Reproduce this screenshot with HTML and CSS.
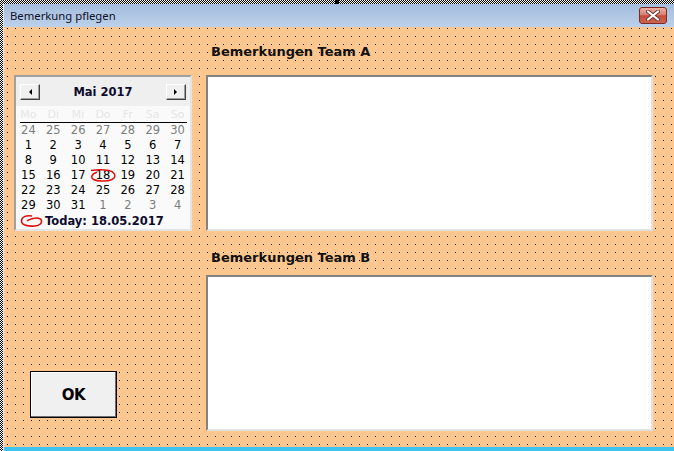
FILE: index.html
```html
<!DOCTYPE html>
<html lang="de">
<head>
    <meta charset="UTF-8">
    <title>Bemerkung pflegen</title>
    <link rel="stylesheet" href="styles.css">
</head>
<body>

<div class="screen">
    <div class="hatch-top"><span class="handle"></span></div>
    <div class="frame-body">
        <div class="hatch-left"></div>
        <div class="window">
            <!-- Titelleiste -->
            <div class="titlebar">
                <span class="title">Bemerkung pflegen</span>
                <button type="button" class="close-btn" aria-label="Schließen">
                    <svg width="14" height="11" viewBox="0 0 14 11">
                        <path d="M2 1.5 L12 9.5 M12 1.5 L2 9.5" stroke="#6a3a34" stroke-width="4" stroke-linecap="round"/>
                        <path d="M2 1.5 L12 9.5 M12 1.5 L2 9.5" stroke="#fff" stroke-width="2.2" stroke-linecap="round"/>
                    </svg>
                </button>
            </div>

            <!-- Formular -->
            <div class="client">
                <div class="label label-a">Bemerkungen Team A</div>

                <div class="calendar">
                    <div class="cal-head">
                        <button type="button" class="nav-btn"><span class="arrow-left"></span></button>
                        <span class="month">Mai 2017</span>
                        <button type="button" class="nav-btn"><span class="arrow-right"></span></button>
                    </div>
                    <div class="weekdays">
                        <span>Mo</span><span>Di</span><span>Mi</span><span>Do</span><span>Fr</span><span>Sa</span><span>So</span>
                    </div>
                    <div class="rule"></div>
                    <div class="days" id="days"></div>
                    <div class="today">
                        <svg width="23" height="14" viewBox="0 0 23 14" class="today-mark">
                            <path d="M12 2 C6 1, 1.5 3, 1.5 7 C1.5 11.5, 9 12.5, 15 12 C20 11.5, 22 9, 21.5 6.5 C21 4, 17 3.5, 13 4.5 C10 5.2, 8 6, 7 7" fill="none" stroke="#e01010" stroke-width="1.6"/>
                        </svg>
                        <span>Today: 18.05.2017</span>
                    </div>
                </div>

                <textarea class="note note-a"></textarea>

                <div class="label label-b">Bemerkungen Team B</div>

                <textarea class="note note-b"></textarea>

                <button type="button" class="ok-btn">OK</button>
            </div>
            <div class="bottom-edge"></div>
        </div>
    </div>
</div>

<script>
    // Tage für Mai 2017 aufbauen (Wochenbeginn Montag)
    const daysEl = document.getElementById('days');
    const cells = [];
    [24, 25, 26, 27, 28, 29, 30].forEach(d => cells.push({ d: d, other: true }));
    for (let d = 1; d <= 31; d++) cells.push({ d: d, other: false });
    [1, 2, 3, 4].forEach(d => cells.push({ d: d, other: true }));

    cells.forEach(c => {
        const span = document.createElement('span');
        span.className = c.other ? 'day other' : 'day';
        span.textContent = c.d;
        if (!c.other && c.d === 18) {
            span.classList.add('selected');
            span.innerHTML = '18<svg class="circle" width="27" height="14" viewBox="0 0 27 14">' +
                '<path d="M1 1.5 C6 0.8, 14 0.6, 19 1.6 C24 2.6, 26 6, 24 9 C21 12.5, 8 13, 3.5 10.5 C0.5 8.5, 1.5 4.5, 7 3.2" ' +
                'fill="none" stroke="#e01010" stroke-width="1.5"/></svg>';
        }
        daysEl.appendChild(span);
    });
</script>

</body>
</html>
```

FILE: styles.css
```css
body {
    margin: 0;
    font-family: "DejaVu Sans", sans-serif;
    background: #fff;
    overflow: hidden;
}

.screen {
    width: 674px;
    height: 451px;
    display: flex;
    flex-direction: column;
}

/* Markierungsrahmen des Editors */
.hatch-top {
    height: 4px;
    flex: none;
    position: relative;
    background: repeating-conic-gradient(#000 0 25%, #fff 0 50%) 0 0 / 2px 2px;
}

.handle {
    position: absolute;
    left: 335px;
    top: 0;
    width: 4px;
    height: 4px;
    background: #000;
}

.frame-body {
    flex: 1;
    display: flex;
}

.hatch-left {
    width: 3px;
    flex: none;
    background: repeating-conic-gradient(#000 0 25%, #fff 0 50%) 0 0 / 2px 2px;
}

.window {
    flex: 1;
    display: flex;
    flex-direction: column;
    border-left: 1px solid #dfe6ee;
}

.titlebar {
    height: 23px;
    flex: none;
    display: flex;
    align-items: center;
    justify-content: space-between;
    padding: 0 7px 0 6px;
    background: linear-gradient(#a4bddc, #bcd1ea);
}

.title {
    font-family: "Noto Sans", sans-serif;
    font-size: 11.3px;
    color: #10102a;
}

.close-btn {
    width: 28px;
    height: 17px;
    padding: 0;
    border: 1px solid #7a2c24;
    border-radius: 3px;
    background: linear-gradient(#eab0a4 0%, #d9806f 45%, #c64b39 52%, #cf6450 100%);
    display: flex;
    align-items: center;
    justify-content: center;
}

/* Formularfläche mit Raster */
.client {
    flex: 1;
    display: grid;
    grid-template-columns: 178px 447px;
    grid-template-rows: 48px 156px 44px 156px;
    column-gap: 14px;
    padding: 0 0 16px 10px;
    background-color: #fec78f;
    background-image: url("data:image/svg+xml,%3Csvg xmlns='http://www.w3.org/2000/svg' width='8' height='8'%3E%3Crect x='3' y='1' width='1' height='1' fill='%23000'/%3E%3C/svg%3E");
}

.bottom-edge {
    height: 4px;
    flex: none;
    background: #3fc4ee;
}

.label {
    grid-column: 2;
    align-self: end;
    padding-left: 5px;
    font-size: 13px;
    font-weight: bold;
    line-height: 15px;
    color: #111;
}

.label-a {
    grid-row: 1;
    margin-bottom: 16px;
}

.label-b {
    grid-row: 3;
    margin-bottom: 10px;
}

.note {
    grid-column: 2;
    margin: 0;
    padding: 0;
    resize: none;
    background: #fff;
    border: 2px solid;
    border-color: #828282 #e2e2e2 #e2e2e2 #828282;
    box-sizing: border-box;
    width: 100%;
    height: 100%;
}

.note-a {
    grid-row: 2;
}

.note-b {
    grid-row: 4;
}

/* Kalender */
.calendar {
    grid-column: 1;
    grid-row: 2;
    display: flex;
    flex-direction: column;
    border: 2px solid;
    border-color: #a0a0a0 #e4e4e4 #e4e4e4 #a0a0a0;
    background: #fafafa;
    font-size: 11px;
}

.cal-head {
    height: 29px;
    display: flex;
    align-items: center;
    justify-content: space-between;
    padding: 0 4px;
    background: #efefef;
}

.nav-btn {
    width: 20px;
    height: 16px;
    padding: 0;
    box-sizing: border-box;
    background: #f0f0f0;
    border: 1px solid;
    border-color: #fff #404040 #404040 #fff;
    box-shadow: inset -1px -1px #a0a0a0;
    display: flex;
    align-items: center;
    justify-content: center;
}

.arrow-left {
    width: 0;
    height: 0;
    border-top: 3px solid transparent;
    border-bottom: 3px solid transparent;
    border-right: 3px solid #000;
}

.arrow-right {
    width: 0;
    height: 0;
    border-top: 3px solid transparent;
    border-bottom: 3px solid transparent;
    border-left: 3px solid #000;
}

.month {
    font-size: 11.5px;
    font-weight: bold;
    color: #0b0b2e;
    padding-top: 1px;
}

.weekdays {
    height: 16px;
    line-height: 17px;
    display: grid;
    grid-template-columns: repeat(7, 1fr);
    text-align: center;
    color: #e6e6e6;
}

.rule {
    height: 1px;
    margin: 0 3px 0 4px;
    background: #000;
}

.days {
    display: grid;
    grid-template-columns: repeat(7, 1fr);
    grid-auto-rows: 15px;
    line-height: 15px;
    font-size: 11.5px;
    text-align: center;
    color: #000;
}

.day {
    position: relative;
}

.day.other {
    color: #7d7d7d;
}

.circle {
    position: absolute;
    left: -1px;
    top: 1px;
}

.today {
    height: 16px;
    display: flex;
    align-items: center;
    gap: 2px;
    padding-left: 4px;
    font-size: 11.5px;
    font-weight: bold;
    color: #0b0b2e;
}

.ok-btn {
    grid-column: 1;
    grid-row: 4;
    align-self: end;
    justify-self: start;
    margin: 0 0 13px 16px;
    width: 87px;
    height: 47px;
    padding: 0;
    background: #f0f0f0;
    border: 1px solid #000;
    box-shadow: inset -1px -1px #6e6e6e, inset 1px 1px #fff;
    font-family: "DejaVu Sans", sans-serif;
    font-size: 15px;
    font-weight: bold;
    letter-spacing: -0.5px;
    color: #000;
}
```
